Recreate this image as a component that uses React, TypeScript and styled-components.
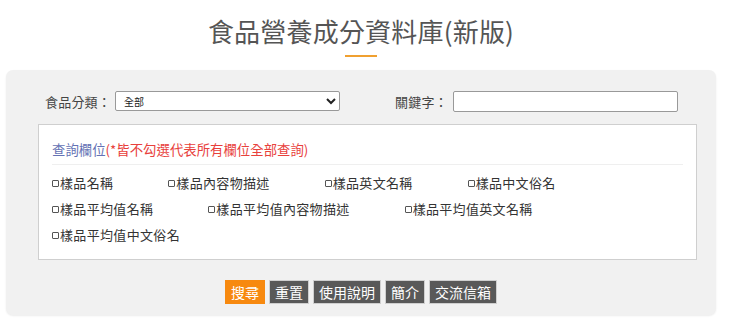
import React from 'react'
import styled, { createGlobalStyle } from 'styled-components'

const GlobalStyle = createGlobalStyle`
    body {
        margin: 0;
        background: #fff;
        font-family: "Noto Sans CJK TC", "Noto Sans", sans-serif;
        color: #333;
    }
`

const Page = styled.div`
    width: 722px;
    height: 328px;
    overflow: hidden;
`

const Header = styled.header`
    height: 70px;
    display: flex;
    flex-direction: column;
    align-items: center;
    padding-top: 14px;
    box-sizing: border-box;
`

const Title = styled.h1`
    margin: 0;
    font-size: 26px;
    line-height: 34px;
    font-weight: 400;
    color: #555;
    letter-spacing: 0.2px;
`

const Underline = styled.div`
    width: 32px;
    height: 2px;
    margin-top: 7px;
    background: #f0a030;
`

const Panel = styled.section`
    width: 710px;
    margin-left: 6px;
    box-sizing: border-box;
    padding: 21px 0 11px;
    background: #f1f1f1;
    border-radius: 7px;
    box-shadow: 0 1px 2px rgba(0, 0, 0, 0.08);
`

const FilterRow = styled.div`
    display: flex;
    align-items: center;
    height: 20px;
    padding-left: 39px;
`

const Field = styled.label<{ $offset?: number }>`
    display: flex;
    align-items: center;
    font-size: 13px;
    color: #444;
    margin-left: ${(p) => p.$offset ?? 0}px;
`

const LabelText = styled.span`
    margin-right: 5px;
    letter-spacing: 0.2px;
`

const Select = styled.select`
    width: 225px;
    height: 20px;
    margin-left: -1px;
    font-size: 10px;
    font-family: "Noto Sans CJK TC", sans-serif;
    color: #222;
    background: #fff;
    border: 1px solid #999;
    border-radius: 2px;
    padding: 0 4px;
`

const TextInput = styled.input`
    width: 225px;
    height: 21px;
    box-sizing: border-box;
    border: 1px solid #999;
    border-radius: 2px;
    background: #fff;
`

const FieldBox = styled.div`
    margin: 13px 19px 0 32px;
    background: #fff;
    border: 1px solid #cfcfcf;
    padding: 12px 13px 11px 13px;
`

const Legend = styled.div`
    font-size: 13.4px;
    line-height: 24px;
    color: #6472b4;
    padding-bottom: 3px;
    border-bottom: 1px solid #efefef;

    .note {
        color: #e8413c;
    }
`

const Options = styled.div`
    display: flex;
    flex-wrap: wrap;
    column-gap: 55px;
    margin-top: 5px;
`

const Option = styled.label`
    display: flex;
    align-items: center;
    font-size: 13px;
    line-height: 26px;
    letter-spacing: 0.33px;
    color: #333;
`

const Box = styled.input.attrs({ type: 'checkbox' })`
    appearance: none;
    width: 7px;
    height: 7px;
    margin: 0 1px 0 0;
    border: 1px solid #555;
    border-radius: 1px;
    background: #fff;
`

const Actions = styled.div`
    display: flex;
    justify-content: center;
    gap: 4px;
    margin-top: 20px;
`

const Button = styled.button<{ $primary?: boolean }>`
    height: 24px;
    padding: 0 5px;
    font-size: 14px;
    font-family: "Noto Sans CJK TC", sans-serif;
    color: #fff;
    background: ${(p) => (p.$primary ? '#f7890f' : '#595959')};
    border: 1px solid ${(p) => (p.$primary ? '#f7890f' : '#cfcfcf')};
    cursor: pointer;
`

const options = [
    '樣品名稱',
    '樣品內容物描述',
    '樣品英文名稱',
    '樣品中文俗名',
    '樣品平均值名稱',
    '樣品平均值內容物描述',
    '樣品平均值英文名稱',
    '樣品平均值中文俗名',
]

const App: React.FC = () => {
    return (
        <Page>
            <GlobalStyle />
            <Header>
                <Title>食品營養成分資料庫(新版)</Title>
                <Underline />
            </Header>

            <Panel>
                <FilterRow>
                    <Field>
                        <LabelText>食品分類：</LabelText>
                        <Select defaultValue="all">
                            <option value="all">全部</option>
                        </Select>
                    </Field>
                    <Field $offset={55}>
                        <LabelText>關鍵字：</LabelText>
                        <TextInput type="text" />
                    </Field>
                </FilterRow>

                <FieldBox>
                    <Legend>
                        查詢欄位<span className="note">(*皆不勾選代表所有欄位全部查詢)</span>
                    </Legend>
                    <Options>
                        {options.map((o) => (
                            <Option key={o}>
                                <Box />
                                {o}
                            </Option>
                        ))}
                    </Options>
                </FieldBox>

                <Actions>
                    <Button $primary>搜尋</Button>
                    <Button>重置</Button>
                    <Button>使用說明</Button>
                    <Button>簡介</Button>
                    <Button>交流信箱</Button>
                </Actions>
            </Panel>
        </Page>
    )
}

export default App
